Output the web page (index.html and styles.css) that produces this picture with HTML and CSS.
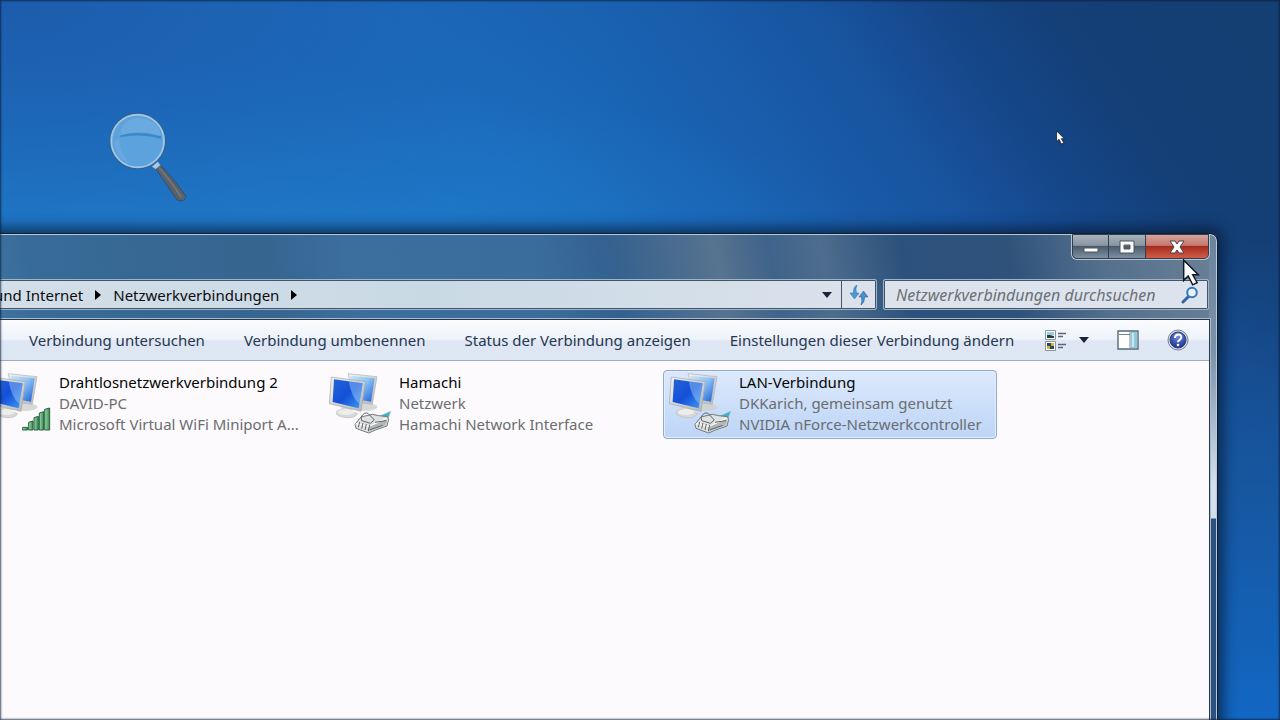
FILE: index.html
```html
<!DOCTYPE html>
<html lang="de">
<head>
<meta charset="utf-8">
<title>Netzwerkverbindungen</title>
<link rel="stylesheet" href="styles.css">
</head>
<body>
<svg class="defs" width="0" height="0" aria-hidden="true">
  <defs>
    <linearGradient id="screen" x1="0" y1="0" x2="1" y2="1"><stop offset="0" stop-color="#2464d6"/><stop offset=".5" stop-color="#1450d8"/><stop offset="1" stop-color="#3f9bf5"/></linearGradient>
    <linearGradient id="screenBack" x1="0" y1="0" x2="1" y2="1"><stop offset="0" stop-color="#cfe6f8"/><stop offset=".45" stop-color="#8cc2f4"/><stop offset="1" stop-color="#1a5fd8"/></linearGradient>
    <linearGradient id="case" x1="0" y1="0" x2="1" y2="1"><stop offset="0" stop-color="#f4f4f2"/><stop offset="1" stop-color="#b4b5b7"/></linearGradient>
    <linearGradient id="bar" x1="0" y1="0" x2="1" y2="0"><stop offset="0" stop-color="#9fdcae"/><stop offset="1" stop-color="#38854f"/></linearGradient>
    <linearGradient id="handle" x1="0" y1="1" x2="1" y2="0"><stop offset="0" stop-color="#39434c"/><stop offset=".5" stop-color="#5c656d"/><stop offset="1" stop-color="#343d46"/></linearGradient>
    <radialGradient id="help" cx=".5" cy=".3" r=".7"><stop offset="0" stop-color="#6f8be0"/><stop offset="1" stop-color="#1b2f92"/></radialGradient>
    <symbol id="monitors" viewBox="24 33 192 192">
      <ellipse cx="134" cy="138" rx="38" ry="12" fill="#cfcfcf" opacity=".8"/>
      <path d="M84 38l87 9-14 83-50-6z" fill="url(#case)" stroke="#b0b2b5" stroke-width="2"/>
      <path d="M90 44l74 8-11 70-44-7z" fill="url(#screenBack)"/>
      <path d="M66 132l28 6 2 14 17 6q-8 14-33 12-32-3-31-16 1-7 17-9z" fill="#d8d8d6" stroke="#bcbcba" stroke-width="2"/>
      <ellipse cx="78" cy="153" rx="25" ry="9" fill="#ededeb"/>
      <path d="M34 48l102 14-13 89-95-23z" fill="url(#case)" stroke="#a3a6a9" stroke-width="2"/>
      <path d="M42 55l86 12-12 75-78-19z" fill="url(#screen)"/>
      <path d="M86 61l42 6-10 62q-23-18-32-68z" fill="#b7e1ff" opacity=".4"/>
    </symbol>
    <symbol id="plug" viewBox="24 33 192 192">
      <path d="M178 166l34-15-7 20-22 8z" fill="#42acc4" stroke="#8cc9d5" stroke-width="2"/>
      <path d="M105 190l18-22 34-8 19 4 26 3 4 8-5 20-35 12-20 9-38-14z" fill="#dfe2e2" stroke="#74797b" stroke-width="3"/>
      <path d="M146 192l56-19-4 20-34 12-20 8z" fill="#b3b8b9"/>
      <path d="M108 188l38 8 54-24" fill="none" stroke="#fff" stroke-width="4"/>
      <path d="M123 168q10-16 21-11l19 20-12 10-26-8zm-4 15l-4 16m14-13l-4 17m14-14l-4 18m14-15l-4 18m20-26l33-5m-48 27l38-13" fill="none" stroke="#606567" stroke-width="3"/>
    </symbol>
    <symbol id="signal" viewBox="24 33 192 192">
      <g fill="url(#bar)" stroke="#286442" stroke-width="3">
        <path d="M128 199h15v8h-15z"/><path d="M146 184l13-4v27h-13z"/><path d="M162 170l13-4v41h-13z"/><path d="M178 156l13-4v55h-13z"/><path d="M194 145l15-4v66h-15z"/>
      </g>
    </symbol>
    <symbol id="pointer" viewBox="0 0 15 24">
      <path d="M1 1v18l4-4 4 8 4-2-4-7h5z" fill="#fff" stroke="#101820" stroke-width="1.3"/>
    </symbol>
  </defs>
</svg>
<main class="desktop">
  <svg class="magnifier" viewBox="50 30 246 282" role="img" aria-label="Lupe">
    <path d="M194 202l16-8q42 44 76 92 3 14-14 17-12 1-17-10z" fill="url(#handle)" stroke="#34516e" stroke-width="3"/>
    <path d="M207 204q38 42 66 89" fill="none" stroke="#84888c" stroke-width="4" opacity=".6"/>
    <path d="M184 200l18-16 9 12-15 12z" fill="#a8c9e6" stroke="#47749c" stroke-width="2"/>
    <circle cx="142" cy="123" r="81" fill="#5ca2dc" stroke="#2f618f" stroke-width="8"/>
    <circle cx="142" cy="123" r="79" fill="none" stroke="#a0c4e4" stroke-width="6"/>
    <path d="M90 108q52-23 122 0-9-52-70-55-52 6-52 55z" fill="#74afe2" opacity=".6"/>
    <path d="M90 106q54-16 122 3v7q-62-17-122-4z" fill="#3b89c6"/>
    <path d="M88 112q-2 51 33 78-43-10-50-66z" fill="#8abce7" opacity=".25"/>
  </svg>
  <svg class="cursor cursor-small" aria-hidden="true"><use href="#pointer"/></svg>

  <section class="window" aria-label="Netzwerkverbindungen">
    <header class="titlebar">
      <div class="controls">
        <button class="control" aria-label="Minimieren"><svg viewBox="0 0 18 16"><path d="M2 9h14v4H2z" fill="#fff" stroke="#4c5561"/></svg></button>
        <button class="control" aria-label="Maximieren"><svg viewBox="0 0 18 16"><path d="M2 2h14v12H2zM6 6v4h6V6z" fill="#fff" fill-rule="evenodd" stroke="#4c5561"/></svg></button>
        <button class="control close" aria-label="Schließen"><svg viewBox="0 0 18 16"><path d="M2 2h5l2 3 2-3h5l-4 6 4 6h-5l-2-3-2 3H2l4-6z" fill="#fff" stroke="#4c4047"/></svg></button>
      </div>
    </header>
    <div class="navigation">
      <nav class="address" aria-label="Adresse">
        <button class="crumb">und Internet</button>
        <svg class="chevron" viewBox="0 0 6 10"><path d="M0 0l6 5-6 5z"/></svg>
        <button class="crumb">Netzwerkverbindungen</button>
        <svg class="chevron" viewBox="0 0 6 10"><path d="M0 0l6 5-6 5z"/></svg>
        <button class="history" aria-label="Vorherige Orte"><svg class="down" viewBox="0 0 10 6"><path d="M0 0h10L5 6z"/></svg></button>
        <button class="refresh" aria-label="Aktualisieren"><svg viewBox="0 0 20 20"><path d="M8 0Q4 2 4.500 8H1l4.500 6L10 8H7.500Q6 4 8 0z" fill="#4a9ad6" stroke="#2f6ba3" stroke-width=".5"/><path d="M12 20q4-3 3.500-8H19l-4.500-6L10 12h2.500q1 4-.5 8z" fill="#4b8fd0" stroke="#254f8b" stroke-width=".5"/></svg></button>
      </nav>
      <form class="search">
        <input type="search" aria-label="Netzwerkverbindungen durchsuchen" placeholder="Netzwerkverbindungen durchsuchen">
        <svg viewBox="0 0 18 18" aria-hidden="true"><path d="M8 10l-6 6" stroke="#34659b" stroke-width="3" stroke-linecap="round"/><circle cx="11" cy="6.500" r="4.800" fill="#e6f3fd" stroke="#3877b8" stroke-width="2"/></svg>
      </form>
    </div>
    <div class="content">
      <div class="toolbar">
        <div class="actions">
          <button>Verbindung untersuchen</button>
          <button>Verbindung umbenennen</button>
          <button>Status der Verbindung anzeigen</button>
          <button>Einstellungen dieser Verbindung ändern</button>
        </div>
        <div class="tools">
          <button class="view" aria-label="Ansicht ändern">
            <svg class="tool-icon" viewBox="0 0 22 22"><path d="M.5 1.500h10v9H.5zM.5 12.500h10v9H.5z" fill="#fff" stroke="#8b949e"/><path d="M2 3h7v3H2z" fill="#9bcde0"/><path d="M2 6h3l4 1v2H2z" fill="#203e45"/><path d="M2 14h7v6H2z" fill="#d1b638"/><path d="M2 14h4v3H2zM5 17h4v3H5z" fill="#27475d"/><path d="M13 4.500h8M13 7.500h5M13 15.500h8M13 18.500h5" stroke="#596878" stroke-width="1.300"/></svg>
            <svg class="down" viewBox="0 0 10 6"><path d="M0 0h10L5 6z"/></svg>
          </button>
          <button aria-label="Vorschaufenster"><svg class="tool-icon" viewBox="0 0 22 22"><path d="M1 2h20v18H1z" fill="#fff" stroke="#54697a" stroke-width="1.400"/><path d="M2 5.500h11M13 3v16" stroke="#718493"/><path d="M14 3h6v16h-6z" fill="#8fc9dc"/><path d="M15 4h2v14h-2z" fill="#c6e7ef"/></svg></button>
          <button aria-label="Hilfe"><svg class="tool-icon" viewBox="0 0 22 22"><circle cx="11" cy="11" r="10" fill="#d8dce5" stroke="#7d8593"/><circle cx="11" cy="11" r="8" fill="url(#help)" stroke="#31417f"/><path d="M8 9q0-3.500 3.200-3.500T14.300 8.300q0 1.600-1.700 2.500T11 13.200" fill="none" stroke="#fff" stroke-width="2"/><circle cx="11" cy="16" r="1.300" fill="#fff"/></svg></button>
        </div>
      </div>
      <div class="connections">
        <button class="connection">
          <span class="icon"><svg><use href="#monitors"/></svg><svg><use href="#signal"/></svg></span>
          <span class="details"><strong>Drahtlosnetzwerkverbindung 2</strong><span>DAVID-PC</span><span>Microsoft Virtual WiFi Miniport A...</span></span>
        </button>
        <button class="connection">
          <span class="icon"><svg><use href="#monitors"/></svg><svg><use href="#plug"/></svg></span>
          <span class="details"><strong>Hamachi</strong><span>Netzwerk</span><span>Hamachi Network Interface</span></span>
        </button>
        <button class="connection selected">
          <span class="icon"><svg><use href="#monitors"/></svg><svg><use href="#plug"/></svg></span>
          <span class="details"><strong>LAN-Verbindung</strong><span>DKKarich, gemeinsam genutzt</span><span>NVIDIA nForce-Netzwerkcontroller</span></span>
        </button>
      </div>
    </div>
  </section>
  <svg class="cursor cursor-large" aria-hidden="true"><use href="#pointer"/></svg>
</main>
</body>
</html>
```

FILE: styles.css
```css
* { box-sizing: border-box; }
body { margin: 0; font-family: "Noto Sans", "Open Sans", sans-serif; font-size: 15px; }
button, input { font: inherit; color: inherit; border: 0; padding: 0; background: none; }
svg { display: block; }
.defs { position: absolute; }

.desktop {
  position: relative;
  min-height: 100vh;
  overflow: hidden;
  background:
    radial-gradient(ellipse 50% 40% at 0% 0%, rgba(30, 88, 168, .8), transparent),
    radial-gradient(ellipse 60% 30% at 10% 38%, rgba(34, 134, 210, .75), transparent),
    linear-gradient(56deg, #1b72c4 0%, #1b6cbe 50%, #195fae 64%, #18539e 74%, #15478a 80%, #143f77 87%, #143f72 100%);
}
.desktop::before {
  content: "";
  position: absolute;
  top: 240px; right: 0; bottom: 0;
  width: 70px;
  background: linear-gradient(#14407a00, #17569f 50%, #1267c3);
}
.desktop::after {
  content: "";
  position: absolute;
  inset: 0;
  box-shadow: inset 0 0 2px 1px rgba(12, 30, 55, .75);
  pointer-events: none;
}
.magnifier { position: absolute; left: 107px; top: 110px; width: 82px; height: 94px; }
.cursor { position: absolute; pointer-events: none; }
.cursor-small { left: 1056px; top: 130px; width: 9px; height: 15px; }
.cursor-large { left: 1182px; top: 259px; width: 18px; height: 27px; }

.window {
  position: absolute;
  left: -21px; right: 62px; top: 233px; bottom: -20px;
  display: flex;
  flex-direction: column;
  padding: 0 7px 0 0;
  border: 1px solid #0d1e30;
  border-radius: 8px;
  background:
    linear-gradient(transparent 284px, #2c537f 285px) right / 8px 100% no-repeat,
    linear-gradient(#6a829c, #7d93aa 120px, #d3dfec 250px, #c7d6e6) right / 8px 100% no-repeat,
    linear-gradient(80deg, #4a86b8 0, #386b98 10%, #36658f 28%, #3c6e9e 34%, #3b6d9c 48%, #34618f 54%, #57738f 62%, #3f638a 66%, #4e6d8d 70%, #2c517c 76%, #2f527b 84%, #54708d 91%, #6b8096 100%);
  box-shadow: inset 0 0 0 1px #b7c9da, 0 0 14px 5px rgba(7, 25, 52, .75);
}
.titlebar { display: flex; justify-content: flex-end; height: 45px; }
.controls {
  display: flex;
  height: 26px;
  border: 1px solid #bac5d0;
  border-top: 0;
  border-radius: 0 0 6px 6px;
  overflow: hidden;
}
.control {
  display: grid;
  place-items: center;
  width: 37px;
  border: 1px solid #303e4e;
  border-left-width: 0;
  background: linear-gradient(#a8b2bd, #8995a1 45%, #4a5c6d 50%, #7d8fa2);
}
.control:first-child { border-left-width: 1px; border-bottom-left-radius: 5px; }
.control svg { width: 18px; height: 16px; }
.control.close { width: 63px; border-bottom-right-radius: 5px; background: linear-gradient(#d7a39c, #c4796f 45%, #a52d20 50%, #cf5c47); }

.navigation { display: flex; gap: 6px; height: 31px; padding-right: 1px; }
.address, .search {
  display: flex;
  align-items: center;
  border: 1px solid #9db3c8;
  border-radius: 2px;
  background: #d3dde7;
  box-shadow: inset 0 0 0 1px #41566c;
}
.address { flex: 1; padding-left: 13px; background: linear-gradient(90deg, #d3dfe9, #c9d9e4 50%, #dbe2ec); }
.crumb { color: #0b0d10; white-space: nowrap; }
.chevron { width: 6px; height: 10px; margin: 0 12px; }
.history { margin-left: auto; padding: 9px; }
.down { width: 10px; height: 6px; fill: #17243a; }
.refresh { display: grid; place-items: center; align-self: stretch; width: 35px; border-left: 1px solid #41566c; }
.refresh svg { width: 20px; height: 20px; }
.search { width: 326px; padding: 0 9px 0 12px; background: #dce3ec; }
.search input { flex: 1; min-width: 0; outline: 0; font-size: 16px; }
.search input::placeholder { color: #6d7176; font-style: italic; opacity: 1; }
.search svg { width: 18px; height: 18px; }

.content {
  flex: 1;
  margin-top: 9px;
  border: 1px solid #25384c;
  outline: 1px solid #a9bdd0;
  background: #fcfafc;
}
.toolbar {
  display: flex;
  align-items: center;
  justify-content: space-between;
  height: 41px;
  padding: 0 20px 0 48px;
  border-bottom: 1px solid #a2adbd;
  background: linear-gradient(#fbfcfe, #eef3fb 48%, #dfe7f4 52%, #dde6f3);
  color: #26374f;
  white-space: nowrap;
}
.actions { display: flex; gap: 39px; }
.tools { display: flex; align-items: center; gap: 28px; }
.view { display: flex; align-items: center; gap: 12px; }
.tool-icon { width: 22px; height: 22px; }

.connections {
  display: grid;
  grid-template-columns: repeat(auto-fill, 334px);
  gap: 6px;
  padding: 9px 2px;
}
.connection {
  display: flex;
  align-items: flex-start;
  gap: 7px;
  padding: 1px 4px;
  height: 69px;
  border: 1px solid transparent;
  border-radius: 4px;
  text-align: left;
  color: #6b6d70;
}
.selected {
  border-color: #8fabd0;
  background: linear-gradient(#dce9fb, #bdd5f7);
  box-shadow: inset 0 0 0 1px #e3eefc;
}
.icon { display: grid; }
.icon svg { grid-area: 1 / 1; width: 64px; height: 64px; }
.details { display: flex; flex-direction: column; line-height: 21px; white-space: nowrap; }
.details strong { font-weight: 400; color: #050505; }
```
